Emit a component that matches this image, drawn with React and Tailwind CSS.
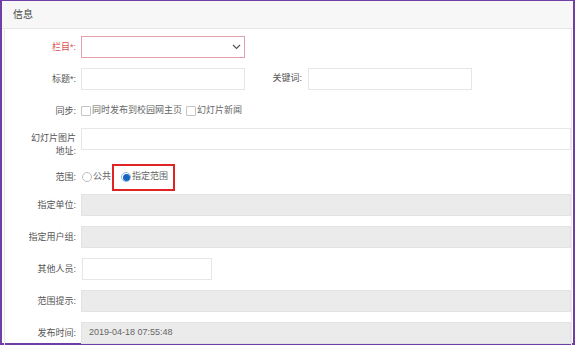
import React from 'react'

const FONT = { fontFamily: '"Liberation Sans", "Noto Sans CJK SC", sans-serif' }

function Label({ children, red, className = '' }) {
  return (
    <div
      className={[
        'w-[71px] shrink-0 text-right text-[9px] leading-[13px]',
        red ? 'text-[#d9534f]' : 'text-[#555]',
        className,
      ].join(' ')}
    >
      {children}
    </div>
  )
}

function TextBox({ className = '', children }) {
  return (
    <div className={['h-[22px] border border-[#e6e6e6] bg-white', className].join(' ')}>{children}</div>
  )
}

function GrayBox({ children }) {
  return (
    <div className="flex h-[22px] flex-1 items-center border border-[#e3e3e3] bg-[#ebebeb] pl-[7px] text-[9px] text-[#666]">
      {children}
    </div>
  )
}

function Check({ children }) {
  return (
    <span className="flex items-center">
      <span className="h-[10px] w-[10px] rounded-[1px] border border-[#c4c4c4] bg-white" />
      <span className="ml-[1px] text-[9px] text-[#666]">{children}</span>
    </span>
  )
}

export default function App() {
  return (
    <div className="h-[345px] w-[575px] overflow-hidden bg-white" style={FONT}>
      <div className="h-full w-full border-2 border-t border-[#6f3fa5]">
        {/* 标题栏 */}
        <div className="flex h-[28px] items-center border-b border-[#e6e6e6] bg-[#f7f7f7] pl-[11px] text-[10px] text-[#444]">
          信息
        </div>

        <div className="ml-[2px] mr-[1px] h-full border-x border-[#e8e8e8] pt-[7px]">
          {/* 栏目 */}
          <div className="flex h-[22px] items-center gap-[5px]">
            <Label red>栏目*:</Label>
            <div className="relative h-[22px] w-[164px] border border-[#e3a2ab] bg-white">
              <svg className="absolute right-[3px] top-[7px]" width="9" height="6" viewBox="0 0 9 6">
                <path d="M1 1l3.5 3.5L8 1" fill="none" stroke="#555" strokeWidth="1.2" />
              </svg>
            </div>
          </div>

          {/* 标题 / 关键词 */}
          <div className="mt-[10px] flex h-[22px] items-center gap-[5px]">
            <Label>标题*:</Label>
            <TextBox className="w-[164px]" />
            <div className="w-[52px] shrink-0 text-right text-[9px] text-[#555]">关键词:</div>
            <TextBox className="ml-[1px] w-[164px]" />
          </div>

          {/* 同步 */}
          <div className="mt-[10px] flex h-[22px] items-center gap-[5px]">
            <Label>同步:</Label>
            <div className="flex items-center gap-[4px]">
              <Check>同时发布到校园网主页</Check>
              <Check>幻灯片新闻</Check>
            </div>
          </div>

          {/* 幻灯片图片地址 */}
          <div className="mt-[6px] flex h-[29px] items-start gap-[5px]">
            <Label className="pt-[4px]">
              幻灯片图片
              <br />
              地址:
            </Label>
            <TextBox className="flex-1" />
          </div>

          {/* 范围 */}
          <div className="mt-[9px] flex h-[22px] items-center gap-[5px]">
            <Label>范围:</Label>
            <div className="flex items-center">
              <span className="ml-[1px] h-[10px] w-[10px] rounded-full border border-[#bdbdbd] bg-white" />
              <span className="ml-[1px] text-[9px] text-[#666]">公共</span>
              <span className="ml-[1px] flex h-[27px] items-center border-2 border-[#e02424] pl-[7px] pr-[5px]">
                <span className="flex h-[10px] w-[10px] items-center justify-center rounded-full border border-[#8fb6e3] bg-white">
                  <span className="h-[7px] w-[7px] rounded-full bg-[#1565c0]" />
                </span>
                <span className="ml-[1px] text-[9px] text-[#666]">指定范围</span>
              </span>
            </div>
          </div>

          {/* 指定单位 */}
          <div className="mt-[6px] flex h-[22px] items-center gap-[5px]">
            <Label>指定单位:</Label>
            <GrayBox />
          </div>

          {/* 指定用户组 */}
          <div className="mt-[10px] flex h-[22px] items-center gap-[5px]">
            <Label>指定用户组:</Label>
            <GrayBox />
          </div>

          {/* 其他人员 */}
          <div className="mt-[10px] flex h-[22px] items-center gap-[5px]">
            <Label>其他人员:</Label>
            <TextBox className="ml-[1px] w-[130px]" />
          </div>

          {/* 范围提示 */}
          <div className="mt-[10px] flex h-[22px] items-center gap-[5px]">
            <Label>范围提示:</Label>
            <GrayBox />
          </div>

          {/* 发布时间 */}
          <div className="mt-[10px] flex h-[22px] items-center gap-[5px]">
            <Label>发布时间:</Label>
            <GrayBox>2019-04-18 07:55:48</GrayBox>
          </div>
        </div>
      </div>
    </div>
  )
}
